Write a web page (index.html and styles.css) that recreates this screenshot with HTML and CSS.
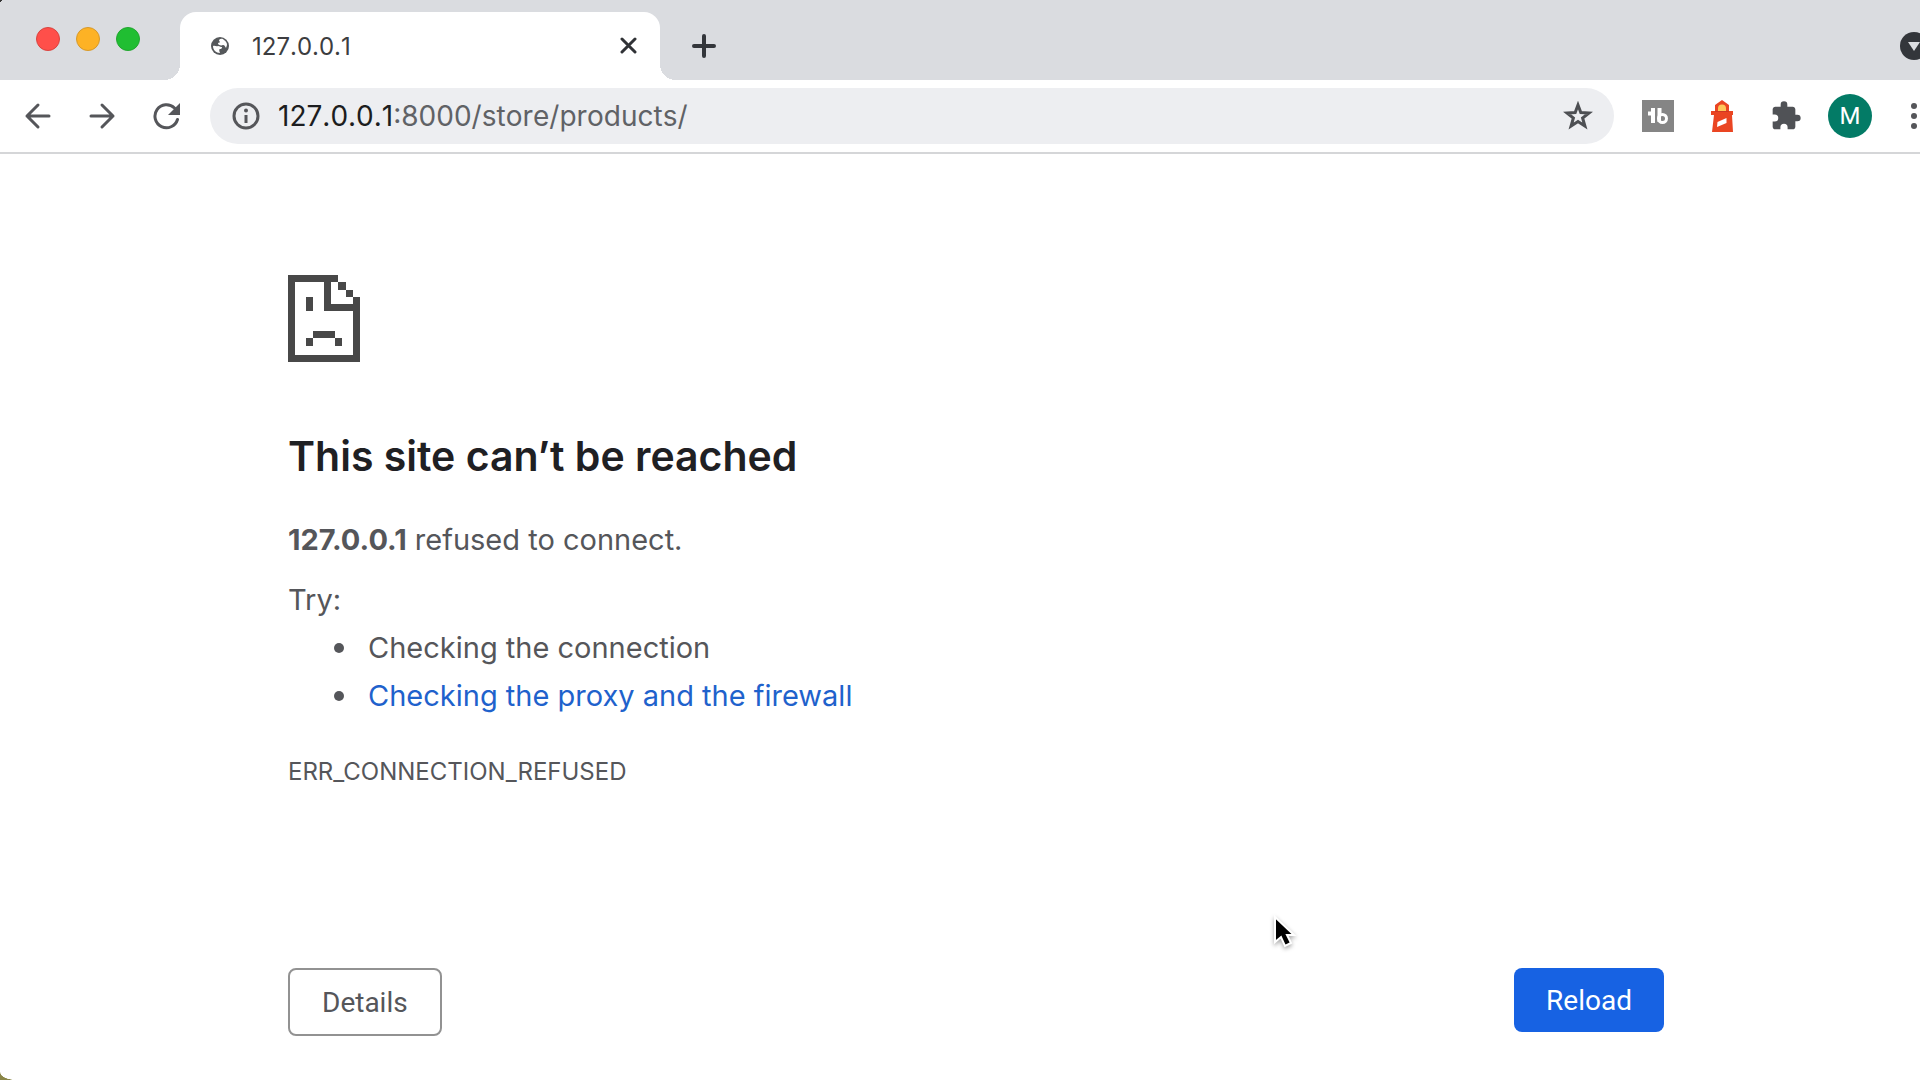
FILE: index.html
```html
<!DOCTYPE html>
<html lang="en">
<head>
<meta charset="utf-8">
<title>127.0.0.1</title>
<link rel="stylesheet" href="styles.css">
</head>
<body>
<header class="browser">
  <div class="tab-strip">
    <div class="lights">
      <button class="light light-close" aria-label="Close window"></button>
      <button class="light light-min" aria-label="Minimize window"></button>
      <button class="light light-max" aria-label="Zoom window"></button>
    </div>
    <div class="tab">
      <svg class="favicon" viewBox="0 0 18 18"><circle cx="9" cy="9" r="9" fill="#55585b"/><path d="M2 9c2-1 3 1 5 0 2 0 2 1 3 1 2 0 1 2-1 2-1 0-1 2 0 4-4 0-7-3-7-7zM8 3c2-2 4-1 5 0 2 1 3 3 3 5l-1 3c-1-1-1-3-3-3-2 1-4 0-5-1 0-2 2-1 2-2 0 0-1-1-1-2z" fill="#fff"/></svg>
      <span class="tab-title">127.0.0.1</span>
      <button class="icon-button" aria-label="Close tab"><svg width="18" height="18" viewBox="0 0 18 18"><path d="M2 2l13 13M15 2L2 15" stroke="#303236" stroke-width="3" stroke-linecap="round"/></svg></button>
    </div>
    <button class="icon-button new-tab" aria-label="New tab"><svg width="24" height="24" viewBox="0 0 24 24"><path d="M12 2v20M2 12h20" stroke="#33363b" stroke-width="4" stroke-linecap="round"/></svg></button>
    <button class="icon-button tab-search" aria-label="Search tabs"><svg width="28" height="28" viewBox="0 0 28 28"><circle cx="14" cy="14" r="14" fill="#33363b"/><path d="M8 10h12l-6 9z" fill="#dadce0"/></svg></button>
  </div>
  <div class="toolbar">
    <nav class="nav">
      <button class="icon-button" aria-label="Back"><svg width="28" height="28" viewBox="0 0 28 28"><path d="M25 14H3M14 3L3 14l11 11" class="line"/></svg></button>
      <button class="icon-button" aria-label="Forward"><svg width="28" height="28" viewBox="0 0 28 28"><path d="M3 14h22M14 3l11 11-11 11" class="line"/></svg></button>
      <button class="icon-button" aria-label="Reload page"><svg width="28" height="28" viewBox="0 0 28 28"><path d="M25.500 17.500A11.500 11.500 0 1 1 22.500 6" class="line"/><path d="M28 1v12H16z" fill="#55565a"/></svg></button>
    </nav>
    <div class="omnibox">
      <button class="icon-button" aria-label="Site information"><svg width="28" height="28" viewBox="0 0 28 28"><circle cx="14" cy="14" r="12" class="line"/><path d="M14 13v8" stroke="#55565a" stroke-width="3"/><circle cx="14" cy="8.500" r="2" fill="#55565a"/></svg></button>
      <div class="url"><label for="url">127.0.0.1</label><input id="url" type="text" value=":8000/store/products/"></div>
      <button class="icon-button" aria-label="Bookmark this page"><svg width="30" height="30" viewBox="0 0 30 30"><path d="M15 4l2.800 7.600 8.200.4-6.400 5 2.300 8L15 20.500 8.100 25l2.300-8L4 12l8.200-.4z" fill="none" stroke="#4d4f53" stroke-width="3"/></svg></button>
    </div>
    <div class="extensions">
      <button class="icon-button" aria-label="TubeBuddy"><svg width="32" height="32" viewBox="0 0 32 32"><path fill="#858585" d="M0 0h32v32H0z"/><path d="M11 8v15M6 13.500h7M17.500 8v14" stroke="#fff" stroke-width="4" fill="none"/><circle cx="20.500" cy="18.500" r="4" stroke="#fff" stroke-width="3" fill="none"/><path d="M19 16l4 2.500-4 2.500z" fill="#858585"/></svg></button>
      <button class="icon-button" aria-label="Lighthouse"><svg width="32" height="32" viewBox="0 0 32 32"><path d="M9 5l7-5 7 5v6h4v4h-1l1 17H6l2-17H5v-4h4z" fill="#ea4522"/><path d="M12 11V8.500a4 4 0 0 1 8 0V11z" fill="#ffc658"/><path d="M9 11.500h14" stroke="#ce3824" stroke-width="1" fill="none"/><path d="M11.500 22l9-4v5l-9.500 4z" fill="#fff"/></svg></button>
      <button class="icon-button" aria-label="Extensions"><svg width="32" height="32" viewBox="0 0 24 24"><path d="M20.500 11H19V7c0-1.100-.9-2-2-2h-4V3.500a2.500 2.500 0 0 0-5 0V5H4c-1.100 0-2 .9-2 2v3.800h1.500a2.700 2.700 0 0 1 0 5.400H2V20c0 1.100.9 2 2 2h3.800v-1.500a2.700 2.700 0 0 1 5.400 0V22H17c1.100 0 2-.9 2-2v-4h1.500a2.500 2.500 0 0 0 0-5z" fill="#505256"/></svg></button>
      <button class="avatar" aria-label="Profile">M</button>
      <button class="icon-button" aria-label="Menu"><svg width="6" height="28" viewBox="0 0 6 28"><g fill="#55565a"><circle cx="3" cy="4" r="3"/><circle cx="3" cy="14" r="3"/><circle cx="3" cy="24" r="3"/></g></svg></button>
    </div>
  </div>
</header>
<main class="error">
  <svg class="sad-page" viewBox="0 0 40 48" preserveAspectRatio="none" shape-rendering="crispEdges"><path fill="#484848" d="M0 0h28v4H4v40h32V20H20V4h4v12h12v-4h4v36H0zM28 4h4v4h-4zM32 8h4v4h-4zM10 12h4v8h-4zM14 31h12v4H14zM10 35h4v4h-4zM26 35h4v4h-4z"/></svg>
  <h1>This site can’t be reached</h1>
  <p><strong>127.0.0.1</strong> refused to connect.</p>
  <div class="suggestions">
    <p>Try:</p>
    <ul>
      <li>Checking the connection</li>
      <li><a href="#proxy">Checking the proxy and the firewall</a></li>
    </ul>
  </div>
  <p class="code">ERR_CONNECTION_REFUSED</p>
  <div class="actions">
    <button class="details">Details</button>
    <button class="reload">Reload</button>
  </div>
</main>
<svg class="cursor" width="26" height="36" viewBox="0 0 26 36"><path d="M3 2v25l6-5 4 9 6-3-4-8h7z" fill="#000" stroke="#fff" stroke-width="2"/></svg>
<div class="corner corner-top"></div>
<div class="corner corner-bottom"></div>
</body>
</html>
```
FILE: styles.css
```css
* { box-sizing: border-box; }

body {
  position: relative;
  margin: 0;
  min-height: 100vh;
  overflow-x: hidden;
  background: #fff;
  color: #55565a;
  font-family: Inter, "Liberation Sans", sans-serif;
}

button { font: inherit; cursor: pointer; }
svg { display: block; }

.icon-button {
  flex: none;
  padding: 0;
  border: 0;
  background: none;
}

.line {
  fill: none;
  stroke: #55565a;
  stroke-width: 3;
  stroke-linecap: round;
  stroke-linejoin: round;
}

/* Tab strip */
.tab-strip {
  display: flex;
  align-items: flex-end;
  height: 80px;
  overflow: hidden;
  background: #dadce0;
}

.lights {
  display: flex;
  gap: 16px;
  width: 180px;
  padding: 0 0 29px 36px;
}

.light {
  width: 24px;
  height: 24px;
  padding: 0;
  border: 1px solid;
  border-radius: 50%;
}
.light-close { background: #ff4f4a; border-color: #d9443f; }
.light-min { background: #fdb225; border-color: #d6992b; }
.light-max { background: #20be32; border-color: #22a62f; }

.tab {
  position: relative;
  display: flex;
  align-items: center;
  width: 480px;
  height: 68px;
  padding: 0 22px 0 31px;
  border-radius: 16px 16px 0 0;
  background: #fff;
}
.tab::before,
.tab::after {
  content: "";
  position: absolute;
  bottom: 0;
  width: 16px;
  height: 16px;
}
.tab::before { right: 100%; background: radial-gradient(circle at 0 0, #dadce0 16px, #fff 16px); }
.tab::after { left: 100%; background: radial-gradient(circle at 100% 0, #dadce0 16px, #fff 16px); }

.favicon { width: 18px; height: 18px; }

.tab-title {
  flex: 1;
  margin-left: 23px;
  color: #3c3d40;
  font-size: 24px;
  font-kerning: none;
}

.new-tab { margin: 0 auto 22px 32px; }
.tab-search { margin: 0 -8px 20px 0; }

/* Toolbar */
.toolbar {
  display: flex;
  align-items: center;
  gap: 28px;
  height: 74px;
  padding-left: 24px;
  border-bottom: 2px solid #d5d6d8;
}

.nav { display: flex; gap: 36px; margin-right: 2px; }

.omnibox {
  display: flex;
  flex: 1;
  align-items: center;
  gap: 18px;
  height: 56px;
  padding: 0 21px 0 22px;
  border-radius: 28px;
  background: #edeef1;
}

.url {
  display: flex;
  flex: 1;
  font-size: 28px;
  font-kerning: none;
  line-height: 36px;
}
.url label { color: #1c1d20; }
.url input {
  flex: 1;
  min-width: 0;
  padding: 0;
  border: 0;
  outline: 0;
  background: none;
  color: #606266;
  font: inherit;
}

.extensions {
  display: flex;
  align-items: center;
  gap: 32px;
  padding-right: 3px;
}

.avatar {
  width: 44px;
  height: 44px;
  margin: 0 7px 0 -6px;
  padding: 0;
  border: 0;
  border-radius: 50%;
  background: #037b66;
  color: #fff;
  font-family: Roboto, sans-serif;
  font-size: 24px;
}

/* Error page */
.error { padding: 121px 256px 44px 288px; }

.sad-page { width: 72px; height: 87px; }

h1 {
  margin: 66px 0 32px;
  color: #1f2023;
  font-size: 41px;
  font-weight: 600;
  line-height: 56px;
}

p, li {
  margin: 0;
  font-size: 29px;
  line-height: 48px;
}

.suggestions { margin-top: 12px; }

ul {
  margin: 0;
  padding-left: 46px;
  list-style: none;
}
li {
  display: flex;
  align-items: center;
  gap: 24px;
}
li::before {
  content: "";
  width: 10px;
  height: 10px;
  border-radius: 50%;
  background: #55565a;
}

a { color: #1f62cc; text-decoration: none; }

.code {
  margin-top: 34px;
  font-size: 24px;
  line-height: 36px;
}

.actions {
  display: flex;
  align-items: flex-start;
  justify-content: space-between;
  margin-top: 178px;
  font-family: Roboto, sans-serif;
  font-size: 28px;
  line-height: 32px;
}
.details,
.reload {
  padding: 17px 32px 15px;
  border: 0;
  border-radius: 8px;
}
.details {
  border: 2px solid #929292;
  background: #fff;
  color: #55565a;
}
.reload { background: #1762e3; color: #fff; }

/* Pointer and the rounded window corners */
.cursor {
  position: absolute;
  top: 915px;
  left: 1272px;
  filter: drop-shadow(0 2px 2px rgba(0, 0, 0, 0.35));
}

.corner {
  position: absolute;
  left: 0;
  width: 16px;
  height: 8px;
}
.corner-top { top: 0; width: 3px; height: 3px; background: linear-gradient(135deg, #333 50%, transparent 50%); }
.corner-bottom { bottom: 0; background: radial-gradient(ellipse at 100% 0, transparent 68%, #8a8648 72%); }
```
